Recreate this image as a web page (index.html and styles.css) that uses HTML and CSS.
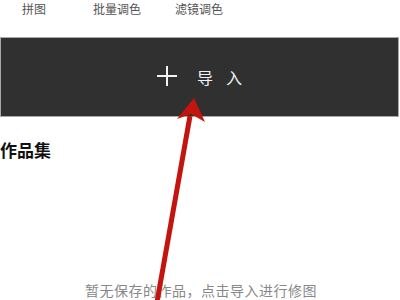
FILE: index.html
```html
<!DOCTYPE html>
<html lang="zh">
<head>
<meta charset="utf-8">
<link rel="stylesheet" href="styles.css">
</head>
<body>
<div class="page">
  <div class="tools">
    <span class="tool t1">拼图</span>
    <span class="tool t2">批量调色</span>
    <span class="tool t3">滤镜调色</span>
  </div>
  <div class="import">
    <svg class="plus" width="20" height="20" viewBox="0 0 20 20"><path d="M10 0V20M0 10H20" stroke="#f2f2f2" stroke-width="2"/></svg>
    <span class="import-text">导入</span>
  </div>
  <h2 class="title">作品集</h2>
  <div class="empty">暂无保存的作品，点击导入进行修图</div>
  <svg class="arrow" width="400" height="300" viewBox="0 0 400 300">
    <path d="M157 302 L190 116" stroke="#c3140e" stroke-width="5" fill="none"/>
    <path d="M194 98 L205 122 L191 114 L177 119 Z" fill="#c3140e"/>
  </svg>
</div>
</body>
</html>
```
FILE: styles.css
```css
html, body {
  margin: 0;
  padding: 0;
  background: #fff;
}
.page {
  position: relative;
  width: 400px;
  height: 300px;
  overflow: hidden;
  font-family: "Noto Sans CJK SC", "Noto Sans", sans-serif;
}
.tools {
  display: flex;
  height: 18px;
  line-height: 18px;
  font-size: 12px;
  color: #555;
  padding-left: 22px;
}
.t2 { margin-left: 47px; }
.t3 { margin-left: 34px; }
.import {
  margin-top: 19px;
  height: 78px;
  width: 384px;
  background: #2f302f;
  border: 1px solid #a8a8a8;
  display: flex;
  align-items: center;
  justify-content: center;
  padding-left: 13px;
  box-sizing: content-box;
}
.plus {
  margin-top: -2px;
}
.import-text {
  margin-left: 20px;
  color: #f2f2f2;
  font-size: 16px;
  letter-spacing: 13px;
}
.title {
  margin: 22px 0 0 0;
  font-size: 17px;
  line-height: 22px;
  font-weight: bold;
  color: #111;
}
.empty {
  margin-top: 119px;
  padding-left: 85px;
  font-size: 14px;
  letter-spacing: 0.5px;
  color: #888;
  line-height: 20px;
}
.arrow {
  position: absolute;
  left: 0;
  top: 0;
}
```
